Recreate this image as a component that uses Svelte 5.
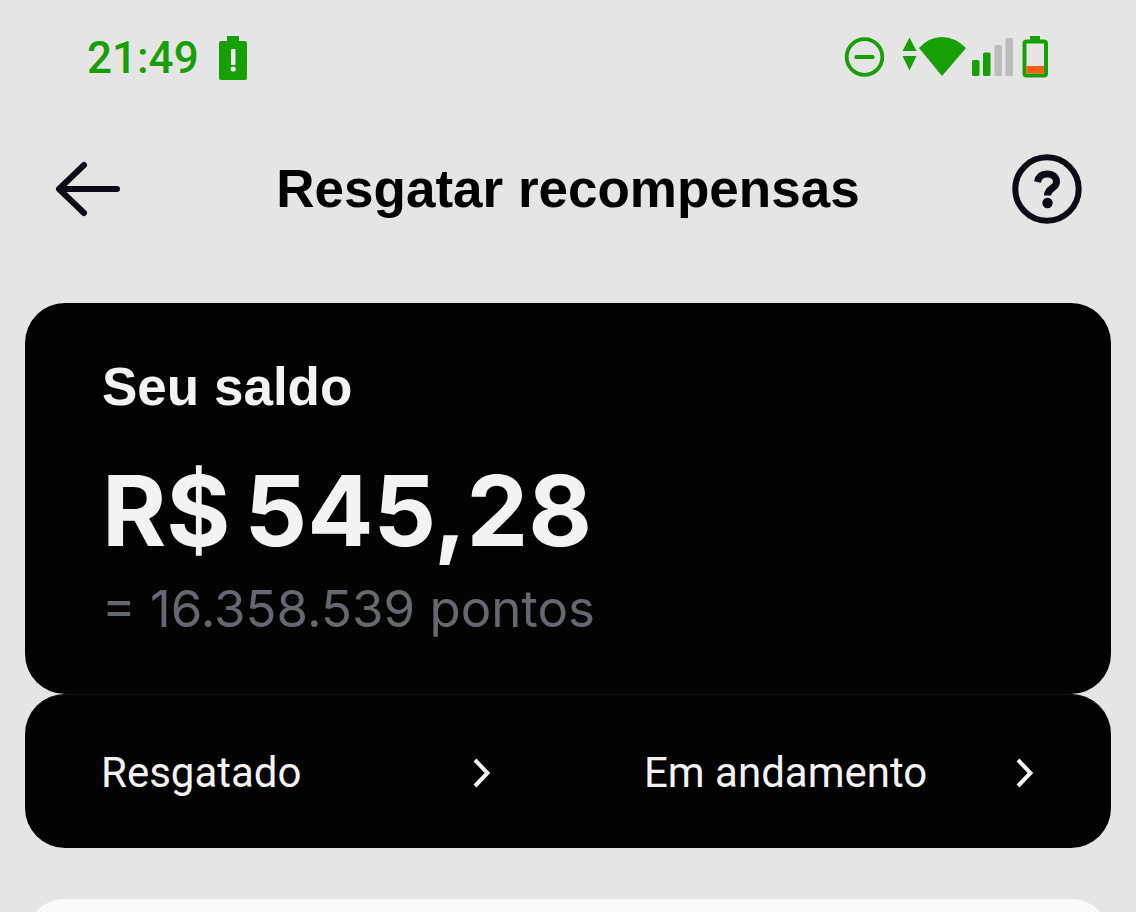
<script>
  const time = '21:49';
  const balance = { currency: 'R$', amount: '545,28', points: '16.358.539' };

  const links = [
    { label: 'Resgatado', href: '#resgatado' },
    { label: 'Em andamento', href: '#em-andamento' }
  ];
</script>

<div class="app">
  <div class="status-bar">
    <div class="status-left">
      <span class="time">{time}</span>
      <svg width="28" height="44" viewBox="0 0 28 44" aria-hidden="true">
        <path fill="#16a006" d="M8 0h12v5h6a2 2 0 0 1 2 2v35a2 2 0 0 1-2 2H2a2 2 0 0 1-2-2V7a2 2 0 0 1 2-2h6z" />
        <rect x="12" y="13" width="4.5" height="16" rx="1" fill="#ececec" />
        <circle cx="14.2" cy="33" r="2.6" fill="#ececec" />
      </svg>
    </div>
    <svg width="204" height="44" viewBox="0 0 204 44" aria-hidden="true">
      <g fill="#16a006">
        <circle cx="20.5" cy="21" r="17.8" fill="none" stroke="#16a006" stroke-width="3.8" />
        <rect x="10.500" y="19" width="20" height="4" rx="1.5" />
        <path d="M65.500 1.500l7 13.500h-14zM58.500 20h14l-7 14.500z" />
        <path d="M75 12Q85 1 98 1t24 11L98 40z" />
        <rect x="128" y="24" width="7.500" height="16" rx="1.500" />
        <rect x="139" y="16.500" width="7.500" height="23.500" rx="1.500" />
        <path d="M186 0h10v4h-10z" />
      </g>
      <g fill="#bcbcbc">
        <rect x="150.500" y="9" width="7.500" height="31" rx="1.500" />
        <rect x="161.500" y="2" width="7.500" height="38" rx="1.500" />
      </g>
      <rect x="180.500" y="5.500" width="21.500" height="34" rx="2" fill="none" stroke="#16a006" stroke-width="4" />
      <rect x="182.500" y="30" width="17.500" height="7.500" fill="#f95d12" />
    </svg>
  </div>

  <header>
    <button class="icon-button" aria-label="Voltar">
      <svg width="70" height="70" viewBox="0 0 70 70" fill="none" stroke="#0b0c15" stroke-width="6" stroke-linejoin="round" stroke-linecap="round" aria-hidden="true">
        <path d="M30 11L5 35l25 24M6 35h57" />
      </svg>
    </button>
    <h1>Resgatar recompensas</h1>
    <button class="icon-button" aria-label="Ajuda">
      <svg width="70" height="70" viewBox="0 0 70 70" fill="none" stroke="#0b0c15" aria-hidden="true">
        <circle cx="35" cy="35" r="31.700" stroke-width="6" />
        <path d="M25.500 28C26.500 22.500 30 20 35 20c6 0 9.500 3.200 9.500 8 0 6.500-9 6-9 13.500" stroke-width="7" />
        <circle cx="35.500" cy="49" r="5.200" fill="#0b0c15" stroke="none" />
      </svg>
    </button>
  </header>

  <main>
    <section class="card balance">
      <h2>Seu saldo</h2>
      <p class="amount"><span>{balance.currency}</span><span>{balance.amount}</span></p>
      <p class="points">= {balance.points} pontos</p>
    </section>

    <nav class="card links">
      {#each links as link}
        <a href={link.href}>
          <span>{link.label}</span>
          <svg width="20" height="30" viewBox="0 0 20 30" fill="none" stroke="#f5f5f5" stroke-width="4" aria-hidden="true">
            <path d="M3 2l12.500 13L3 28" />
          </svg>
        </a>
      {/each}
    </nav>

    <section class="sheet"></section>
  </main>
</div>

<style>
  :global(body) {
    margin: 0;
    background: #e5e5e5;
    font-family: Roboto, 'Liberation Sans', sans-serif;
  }

  .app {
    height: 100vh;
    overflow-y: auto;
    scrollbar-width: none;
    background: #e5e5e5;
  }

  .status-bar {
    display: flex;
    align-items: center;
    justify-content: space-between;
    height: 116px;
    padding: 0 88px 0 87px;
    box-sizing: border-box;
  }

  .status-left {
    display: flex;
    align-items: center;
    gap: 20px;
  }

  .time {
    font-size: 44px;
    line-height: 52px;
    font-weight: 500;
    color: #16a006;
  }

  header {
    display: flex;
    align-items: center;
    justify-content: space-between;
    padding: 37px 54px 78px;
  }

  .icon-button {
    display: flex;
    padding: 0;
    border: none;
    background: none;
    cursor: pointer;
  }

  h1,
  h2,
  p {
    margin: 0;
  }

  h1,
  h2 {
    font-family: 'Liberation Sans', Arial, sans-serif;
    font-size: 53px;
    line-height: 72px;
    font-weight: 700;
  }

  h1 {
    color: #000;
  }

  main {
    padding: 0 25px;
  }

  .card {
    border-radius: 40px;
    background: #030303;
    color: #f4f3f3;
  }

  .balance {
    padding: 48px 77px 53px;
  }

  .amount {
    display: flex;
    gap: 14px;
    margin-top: 28px;
    font-family: Inter, sans-serif;
    font-size: 98px;
    line-height: 120px;
    font-weight: 700;
  }

  .points {
    margin-top: 6px;
    font-family: Inter, sans-serif;
    font-size: 51px;
    line-height: 64px;
    color: #646870;
  }

  .links {
    display: grid;
    grid-template-columns: 1fr 1fr;
    border-top: 1px solid #101010;
  }

  .links a {
    display: flex;
    align-items: center;
    justify-content: space-between;
    padding: 53px 76px 50px;
    font-size: 42px;
    line-height: 50px;
    color: inherit;
    text-decoration: none;
  }

  .sheet {
    min-height: 240px;
    margin-top: 51px;
    border-radius: 40px;
    background: #fafafa;
  }
</style>
